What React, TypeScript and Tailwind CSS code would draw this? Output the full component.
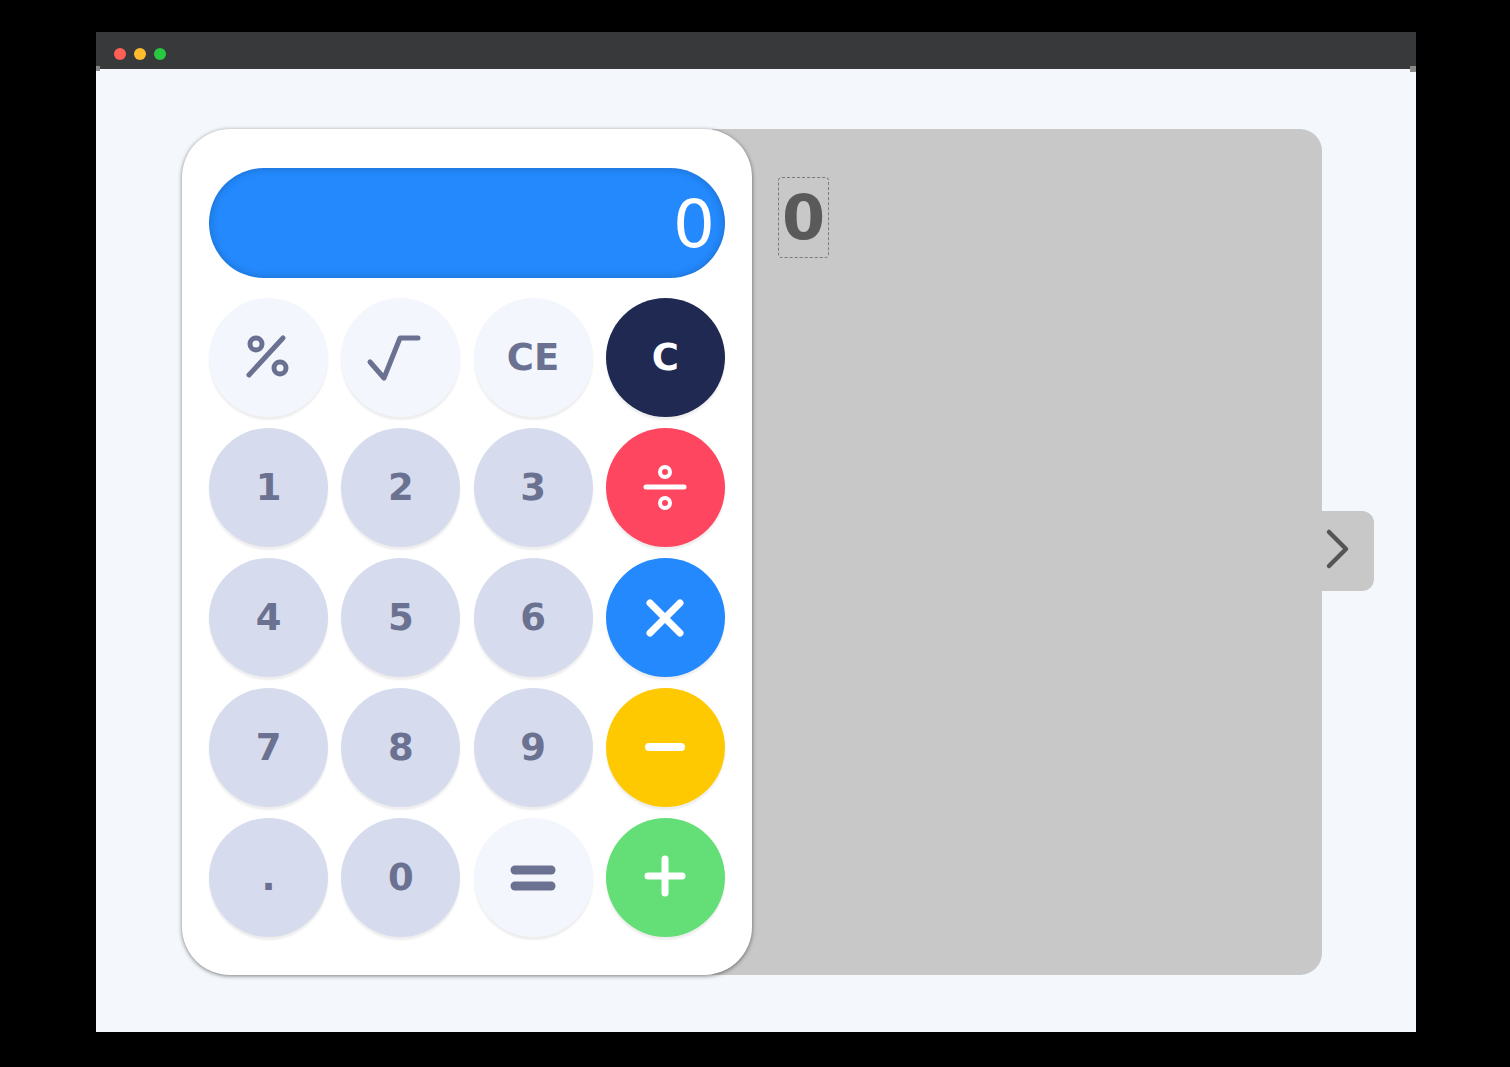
import React from "react";

type Key = {
  id: string;
  tone: "fn" | "num" | "dark" | "red" | "blue" | "yellow" | "green";
  label?: string;
  icon?: React.ReactNode;
};

const toneClass: Record<Key["tone"], string> = {
  fn: "bg-[#f3f6fc] text-[#6b7190]",
  num: "bg-[#d6dcee] text-[#6b7190]",
  dark: "bg-[#1f2952] text-white",
  red: "bg-[#ff4660] text-white",
  blue: "bg-[#2389fd] text-white",
  yellow: "bg-[#ffc901] text-white",
  green: "bg-[#64df77] text-white",
};

const Percent = () => (
  <svg width="60" height="60" viewBox="-30 -30 60 60" fill="none" stroke="#6b7190" strokeWidth="5" strokeLinecap="round">
    <circle cx="-13" cy="-14" r="6" />
    <circle cx="11" cy="10" r="6" />
    <line x1="-20" y1="17" x2="14" y2="-20" />
  </svg>
);

const Root = () => (
  <svg width="70" height="60" viewBox="-35 -30 70 60" fill="none" stroke="#6b7190" strokeWidth="5" strokeLinecap="round" strokeLinejoin="round">
    <polyline points="-31,4 -17,20 -1,-20 17,-20" />
  </svg>
);

const Divide = () => (
  <svg width="50" height="50" viewBox="-25 -25 50 50" fill="none" stroke="white" strokeLinecap="round">
    <circle cx="0" cy="-16" r="5" strokeWidth="4" />
    <circle cx="0" cy="15" r="5" strokeWidth="4" />
    <line x1="-19" y1="-1" x2="19" y2="-1" strokeWidth="5" />
  </svg>
);

const Times = () => (
  <svg width="50" height="50" viewBox="-25 -25 50 50" fill="none" stroke="white" strokeWidth="7" strokeLinecap="round">
    <line x1="-15" y1="-15" x2="15" y2="15" />
    <line x1="15" y1="-15" x2="-15" y2="15" />
  </svg>
);

const Minus = () => (
  <svg width="50" height="50" viewBox="-25 -25 50 50" fill="none" stroke="white" strokeWidth="8" strokeLinecap="round">
    <line x1="-16" y1="-1" x2="16" y2="-1" />
  </svg>
);

const Plus = () => (
  <svg width="50" height="50" viewBox="-25 -25 50 50" fill="none" stroke="white" strokeWidth="7" strokeLinecap="round">
    <line x1="-17" y1="-2" x2="17" y2="-2" />
    <line x1="0" y1="-19" x2="0" y2="15" />
  </svg>
);

const Equals = () => (
  <svg width="56" height="50" viewBox="-28 -25 56 50" fill="none" stroke="#6b7190" strokeWidth="9" strokeLinecap="round">
    <line x1="-18" y1="-8" x2="18" y2="-8" />
    <line x1="-18" y1="8" x2="18" y2="8" />
  </svg>
);

const keys: Key[] = [
  { id: "pct", tone: "fn", icon: <Percent /> },
  { id: "sqrt", tone: "fn", icon: <Root /> },
  { id: "ce", tone: "fn", label: "CE" },
  { id: "c", tone: "dark", label: "C" },
  { id: "1", tone: "num", label: "1" },
  { id: "2", tone: "num", label: "2" },
  { id: "3", tone: "num", label: "3" },
  { id: "div", tone: "red", icon: <Divide /> },
  { id: "4", tone: "num", label: "4" },
  { id: "5", tone: "num", label: "5" },
  { id: "6", tone: "num", label: "6" },
  { id: "mul", tone: "blue", icon: <Times /> },
  { id: "7", tone: "num", label: "7" },
  { id: "8", tone: "num", label: "8" },
  { id: "9", tone: "num", label: "9" },
  { id: "sub", tone: "yellow", icon: <Minus /> },
  { id: "dot", tone: "num", label: "." },
  { id: "0", tone: "num", label: "0" },
  { id: "eq", tone: "fn", icon: <Equals /> },
  { id: "add", tone: "green", icon: <Plus /> },
];

export default function App() {
  return (
    <div className="min-h-[1067px] w-full bg-black pl-[96px] pt-[32px] font-['DejaVu_Sans',sans-serif]">
      <div className="flex h-[1000px] w-[1320px] flex-col">
        {/* title bar */}
        <div className="relative flex h-[37px] items-center gap-[8px] bg-[#37393b] pl-[18px] pt-[7px]">
          <span className="h-[12px] w-[12px] rounded-full bg-[#fe5f57]" />
          <span className="h-[12px] w-[12px] rounded-full bg-[#febc2e]" />
          <span className="h-[12px] w-[12px] rounded-full bg-[#28c840]" />
          <span className="absolute bottom-[-2px] left-0 h-[5px] w-[4px] bg-[#8a8a8a]" />
          <span className="absolute bottom-[-3px] right-0 h-[6px] w-[6px] bg-[#8a8a8a]" />
        </div>

        <div className="flex-1 bg-[#f4f7fc] pl-[86px] pt-[60px]">
          <div className="flex items-stretch">
            {/* calculator card */}
            <div className="relative z-10 w-[570px] rounded-[48px] bg-white px-[27px] pb-[38px] pt-[39px] shadow-[0_1px_4px_rgba(0,0,0,0.5)]">
              <div className="flex h-[110px] items-center justify-end rounded-full bg-[#2389fd] pr-[10px] shadow-[inset_0_0_8px_rgba(0,0,0,0.22)]">
                <span className="mt-[4px] text-[66px] font-normal leading-none text-white">0</span>
              </div>
              <div className="mt-[20px] grid grid-cols-4 gap-x-[13px] gap-y-[11px]">
                {keys.map((k) => (
                  <button
                    key={k.id}
                    className={`flex h-[119px] w-[119px] items-center justify-center rounded-full text-[37px] font-bold leading-none shadow-[0_3px_2px_rgba(0,0,0,0.07)] ${toneClass[k.tone]}`}
                  >
                    {k.icon ?? k.label}
                  </button>
                ))}
              </div>
            </div>

            {/* output panel */}
            <div className="ml-[-40px] flex w-[610px] rounded-r-[22px] bg-[#c8c8c8] pl-[66px] pt-[48px]">
              <div className="self-start rounded-[4px] border border-dashed border-[#7a7a7a] px-[3px] text-[62px] font-bold leading-[79px] text-[#5a5a5a]">
                0
              </div>
            </div>

            {/* side tab */}
            <div className="flex items-center">
              <div className="mb-[2px] flex h-[80px] w-[52px] items-center rounded-r-[12px] bg-[#c8c8c8] pl-[2px]">
                <svg width="30" height="50" viewBox="0 0 30 50" fill="none" stroke="#555555" strokeWidth="4.5" strokeLinecap="round" strokeLinejoin="round">
                  <polyline points="5,6 22,23 5,40" />
                </svg>
              </div>
            </div>
          </div>
        </div>
      </div>
    </div>
  );
}
